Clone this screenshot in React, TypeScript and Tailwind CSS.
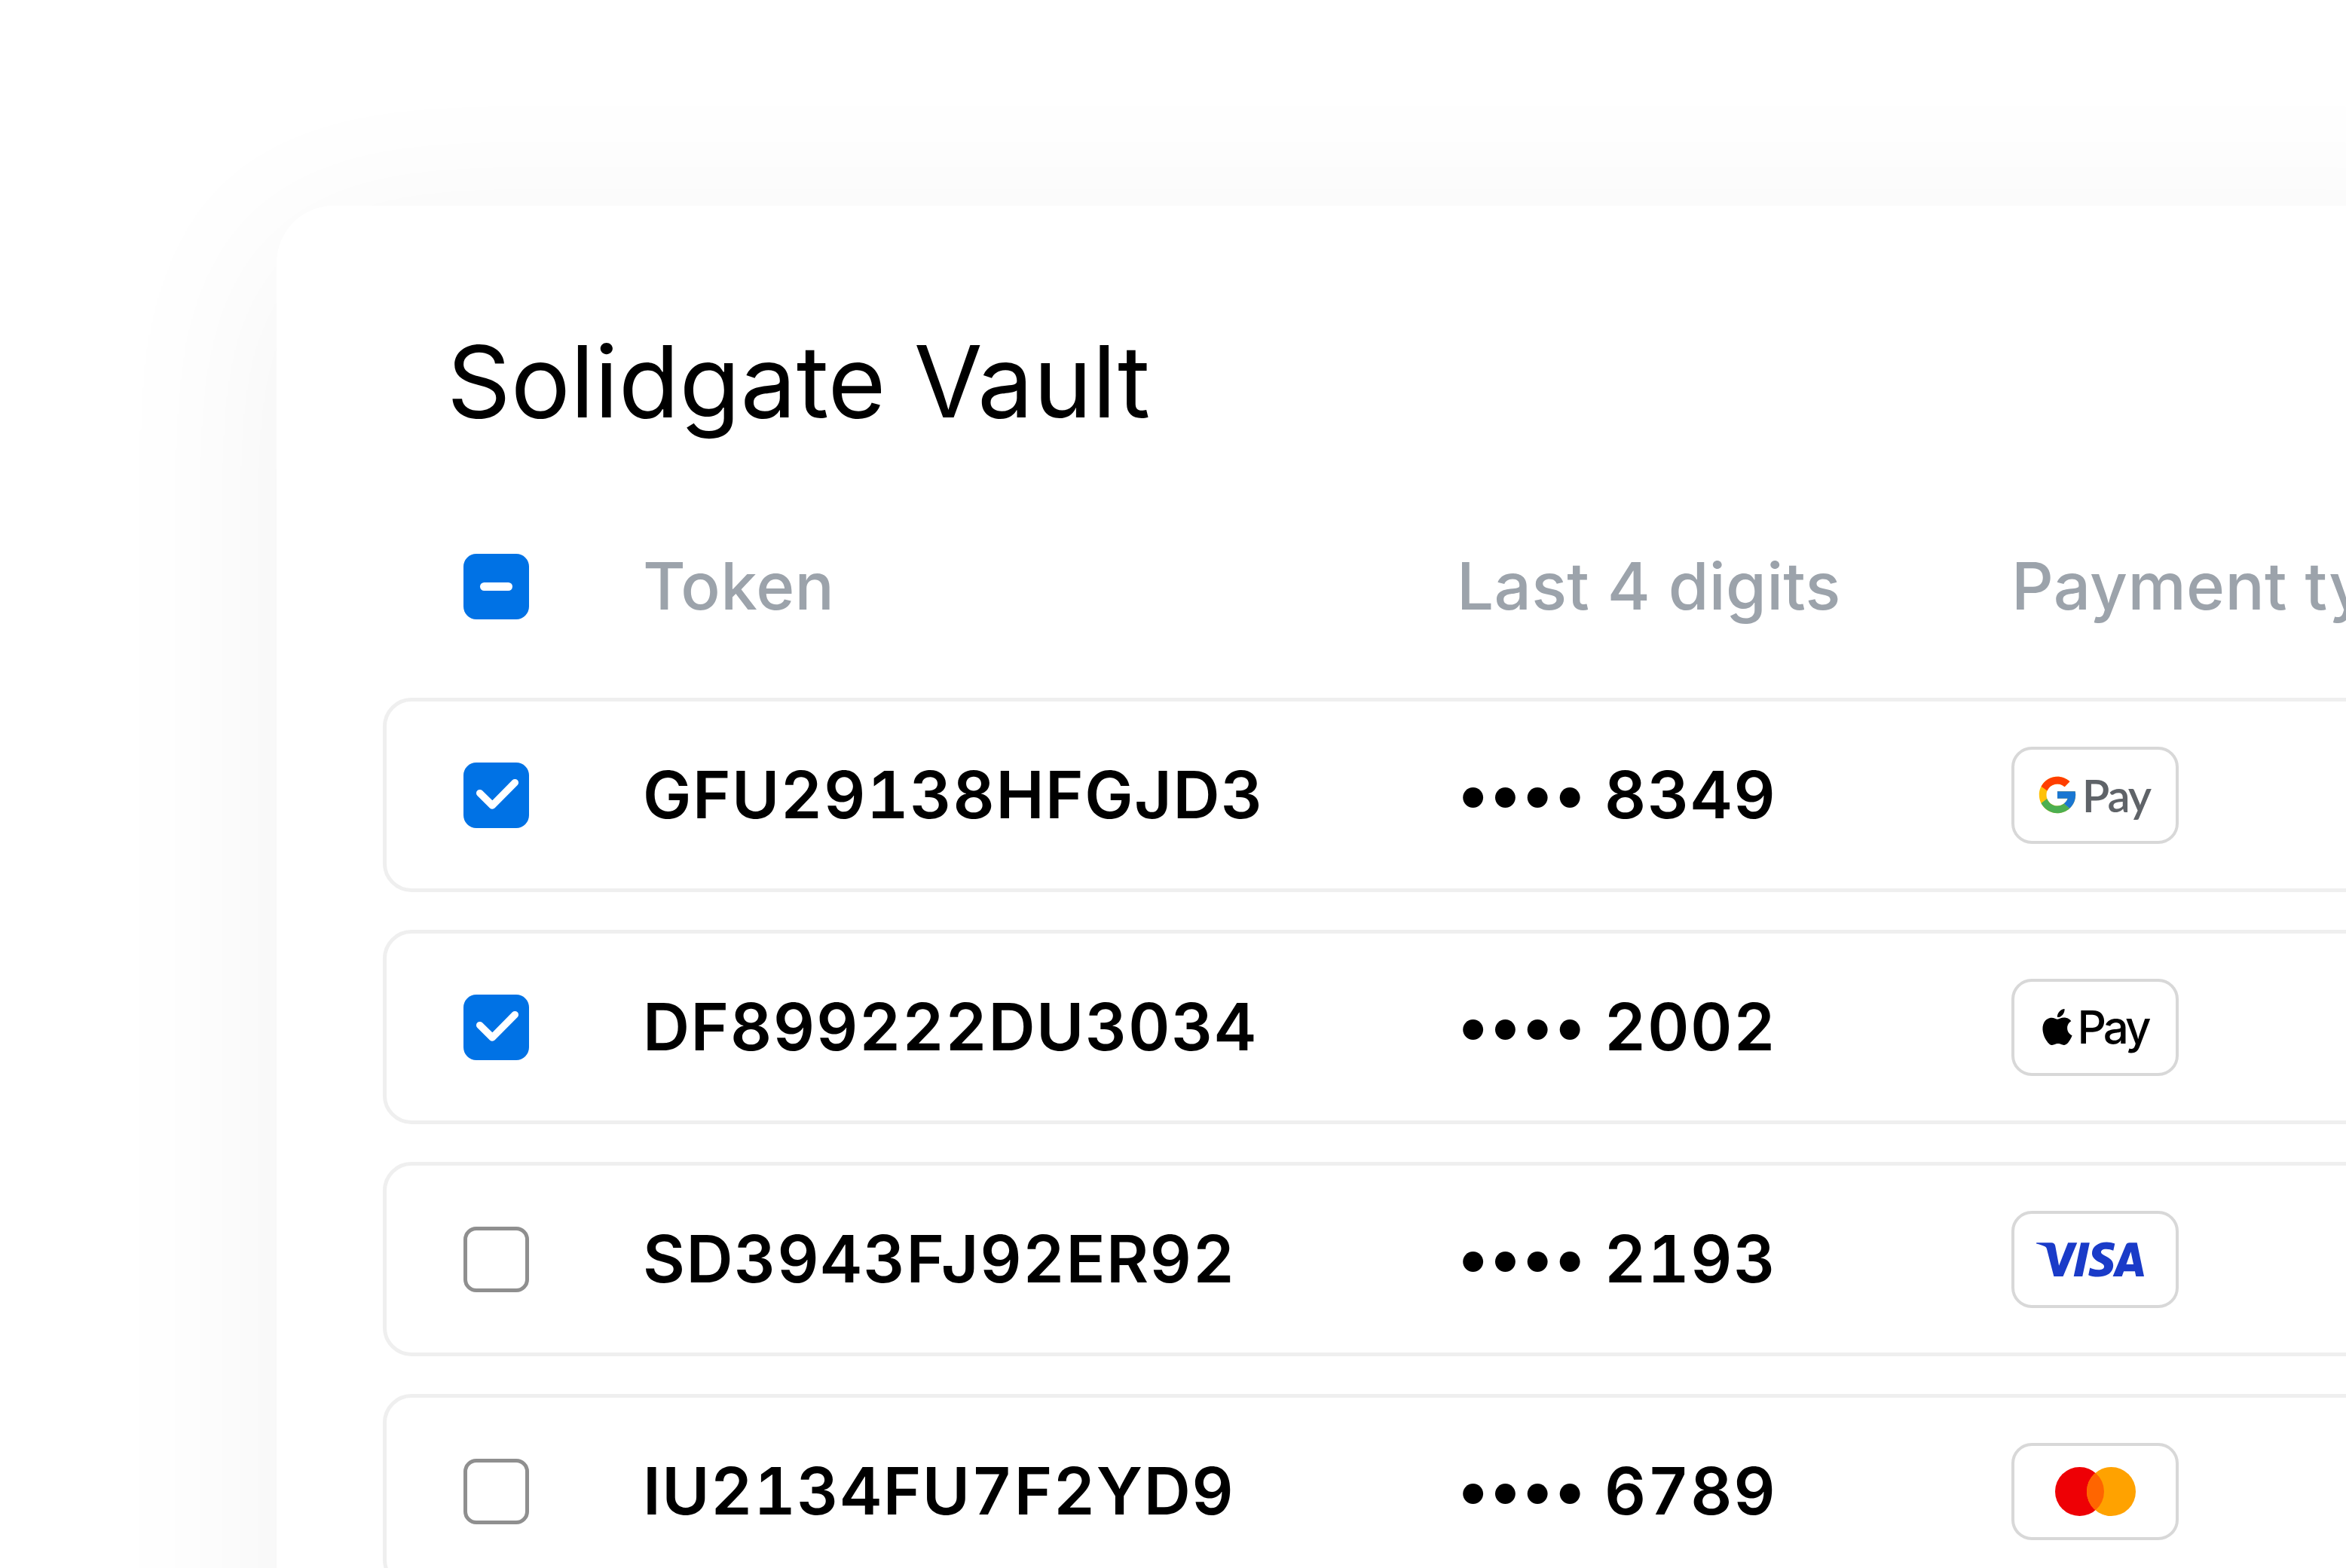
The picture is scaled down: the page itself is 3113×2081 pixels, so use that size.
import { FcGoogle } from "react-icons/fc";
import { SiApple, SiVisa } from "react-icons/si";

type Row = {
  token: string;
  last4: string;
  checked: boolean;
  pay: "google" | "apple" | "visa" | "mastercard";
};

const rows: Row[] = [
  { token: "GFU29138HFGJD3", last4: "8349", checked: true, pay: "google" },
  { token: "DF899222DU3034", last4: "2002", checked: true, pay: "apple" },
  { token: "SD3943FJ92ER92", last4: "2193", checked: false, pay: "visa" },
  { token: "IU2134FU7F2YD9", last4: "6789", checked: false, pay: "mastercard" },
];

const Checkbox = ({ state }: { state: "on" | "off" | "partial" }) => {
  if (state === "off") {
    return <div className="h-[87px] w-[87px] rounded-[17px] border-[5px] border-[#8f8f8f] bg-white" />;
  }
  return (
    <div className="flex h-[87px] w-[87px] items-center justify-center rounded-[17px] bg-[#0072e5]">
      {state === "partial" ? (
        <div className="h-[11px] w-[43px] rounded-full bg-white" />
      ) : (
        <svg viewBox="0 0 87 87" className="h-[87px] w-[87px]">
          <path d="M21.7 40.7 38.3 57 68.3 26.7" fill="none" stroke="#fff" strokeWidth="9.5" strokeLinecap="round" strokeLinejoin="round" />
        </svg>
      )}
    </div>
  );
};

const PayBadge = ({ pay }: { pay: Row["pay"] }) => (
  <div className="flex h-[129px] w-[222px] items-center justify-center rounded-[27px] border-[4px] border-[#d8d8d8] bg-white">
    {pay === "google" && (
      <div className="mr-[6px] flex items-center gap-[4px]">
        <FcGoogle className="h-[58px] w-[58px]" />
        <span className="font-['Lato',sans-serif] text-[60px] leading-none tracking-[-2px] text-[#5f6368]">Pay</span>
      </div>
    )}
    {pay === "apple" && (
      <div className="mr-[4px] flex items-center gap-[3px]">
        <SiApple className="h-[54px] w-[48px] text-black" />
        <span className="text-[60px] leading-none font-medium tracking-[-4px] text-black">Pay</span>
      </div>
    )}
    {pay === "visa" && <SiVisa className="mr-[14px] h-[143px] w-[143px] text-[#1a3bc8]" />}
    {pay === "mastercard" && (
      <svg viewBox="0 0 107 65" className="h-[65px] w-[107px]">
        <circle cx="32.5" cy="32.5" r="32.5" fill="#ee0005" />
        <circle cx="74.5" cy="32.5" r="32.5" fill="#ffa200" />
        <path d="M53.5 7.7a32.5 32.5 0 0 1 0 49.6 32.5 32.5 0 0 1 0-49.6z" fill="#ff6500" />
      </svg>
    )}
  </div>
);

export default function App() {
  return (
    <div className="h-[2081px] w-[3113px] overflow-hidden bg-white pt-[273px] pl-[367px] font-['Inter',sans-serif]">
      <div className="h-[2200px] w-[3000px] rounded-tl-[76px] bg-white pl-[141px] shadow-[0_50px_260px_rgba(0,0,0,0.055)]">
        {/* Title */}
        <h1 className="pt-[153px] pl-[85px] text-[132px] leading-[160px] font-normal text-black">Solidgate Vault</h1>

        {/* Table head */}
        <div className="mt-[127px] grid h-[87px] grid-cols-[238px_1080px_736px_1fr] items-center pl-[107px] text-[87px] font-medium tracking-[0.3px] text-[#9ca3ab]">
          <Checkbox state="partial" />
          <span>Token</span>
          <span>Last 4 digits</span>
          <span className="whitespace-nowrap">Payment type</span>
        </div>

        {/* Rows */}
        <div className="mt-[126px] flex flex-col gap-[50px]">
          {rows.map((row) => (
            <div
              key={row.token}
              className="grid h-[258px] grid-cols-[238px_1080px_736px_1fr] items-center rounded-[38px] border-[5px] border-[#efefef] pl-[102px] text-[86px] font-semibold tracking-[1.5px] text-black tabular-nums"
            >
              <Checkbox state={row.checked ? "on" : "off"} />
              <span>{row.token}</span>
              <span>
                <span className="inline-block -translate-y-[3px] tracking-[-0.5px]">••••</span> {row.last4}
              </span>
              <PayBadge pay={row.pay} />
            </div>
          ))}
        </div>
      </div>
    </div>
  );
}
